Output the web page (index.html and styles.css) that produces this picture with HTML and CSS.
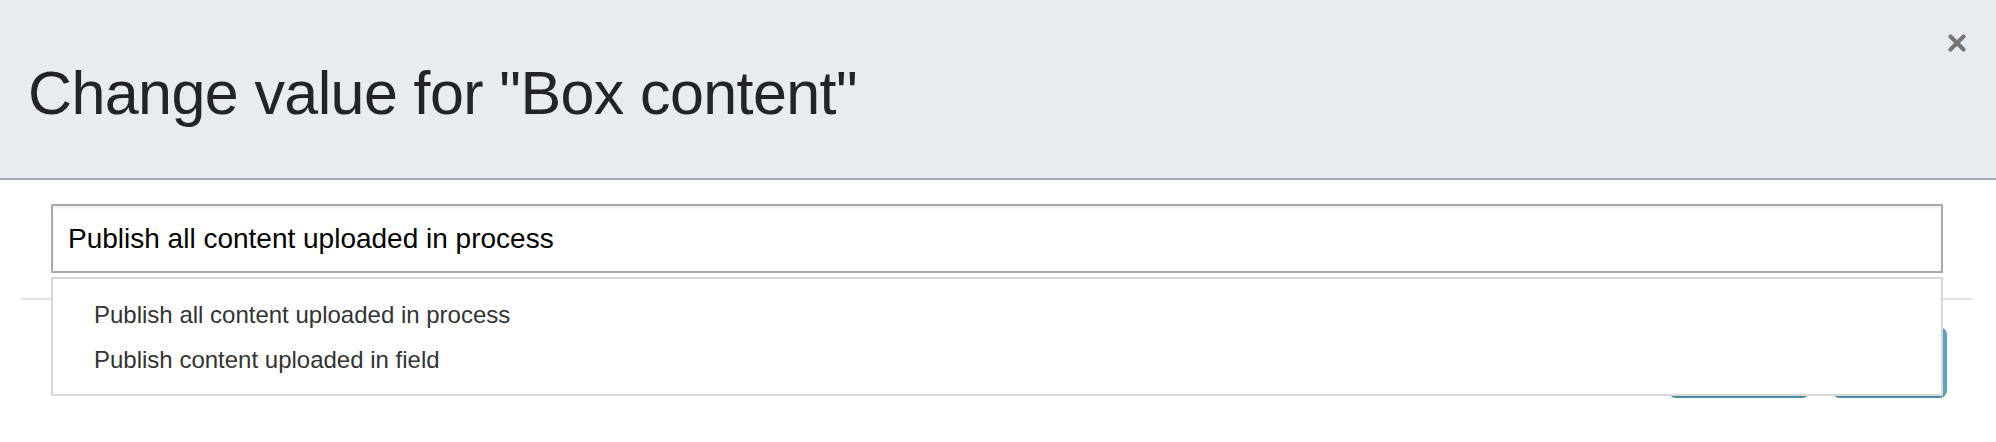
FILE: index.html
```html
<!DOCTYPE html>
<html lang="en">
<head>
<meta charset="utf-8">
<title>Change value</title>
<link rel="stylesheet" href="styles.css">
</head>
<body>
<div class="modal">
  <div class="modal-header">
    <h1 class="modal-title">Change value for "Box content"</h1>
    <button class="close" aria-label="Close">
      <svg width="20" height="20" viewBox="0 0 20 20"><path d="M3.5 3.5 L16.5 16.5 M16.5 3.5 L3.5 16.5" stroke="#777" stroke-width="4.2" stroke-linecap="round"/></svg>
    </button>
  </div>
  <div class="modal-body">
    <div class="combo">
      <div class="input">Publish all content uploaded in process</div>
      <ul class="dropdown">
        <li>Publish all content uploaded in process</li>
        <li>Publish content uploaded in field</li>
      </ul>
    </div>
  </div>
  <div class="modal-footer">
    <button class="btn btn-first">Cancel</button>
    <button class="btn btn-second">Save</button>
  </div>
</div>
</body>
</html>
```
FILE: styles.css
```css
* { box-sizing: border-box; }
html, body { margin: 0; padding: 0; background: #ffffff; }
body { font-family: "Liberation Sans", Arial, sans-serif; width: 1996px; height: 442px; overflow: hidden; }

.modal-header {
  position: relative;
  background: #e8ecf0;
  border-bottom: 2px solid #a5acb6;
  height: 180px;
  padding: 57px 28px 0 28px;
}
.modal-title {
  margin: 0;
  font-weight: normal;
  font-size: 61px;
  line-height: 73px;
  letter-spacing: -0.6px;
  color: #222427;
}
.close {
  position: absolute;
  top: 33px;
  right: 29px;
  width: 20px;
  height: 20px;
  padding: 0;
  border: 0;
  background: none;
  display: flex;
}

.modal-body {
  padding: 24px 53px 0 51px;
}
.combo { position: relative; }
.input {
  height: 69px;
  border: 2px solid #a9a9a9;
  box-shadow: inset 0 2px 2px rgba(0,0,0,0.06);
  padding: 0 15px;
  display: flex;
  align-items: center;
  font-size: 28px;
  color: #000;
}
.dropdown {
  position: absolute;
  top: 73px;
  left: 0;
  right: 0;
  margin: 0;
  list-style: none;
  background: #fff;
  border: 2px solid #d8d8d8;
  padding: 13px 0 12px 41px;
  z-index: 2;
}
.dropdown li {
  font-size: 24px;
  line-height: 45px;
  color: #333;
}

.modal-footer {
  margin: 25px 23px 0 21px;
  border-top: 2px solid #dde2e6;
  padding: 27px 26px 0 0;
  display: flex;
  justify-content: flex-end;
  gap: 22px;
}
.btn {
  height: 71px;
  border: 0;
  border-radius: 8px;
  background: #5aa4c0;
  border-bottom: 3px solid #4a8ba2;
  color: #fff;
  font-family: "Liberation Sans", Arial, sans-serif;
  font-size: 24px;
  padding: 0;
}
.btn-first { width: 142px; }
.btn-second { width: 115px; }
```
